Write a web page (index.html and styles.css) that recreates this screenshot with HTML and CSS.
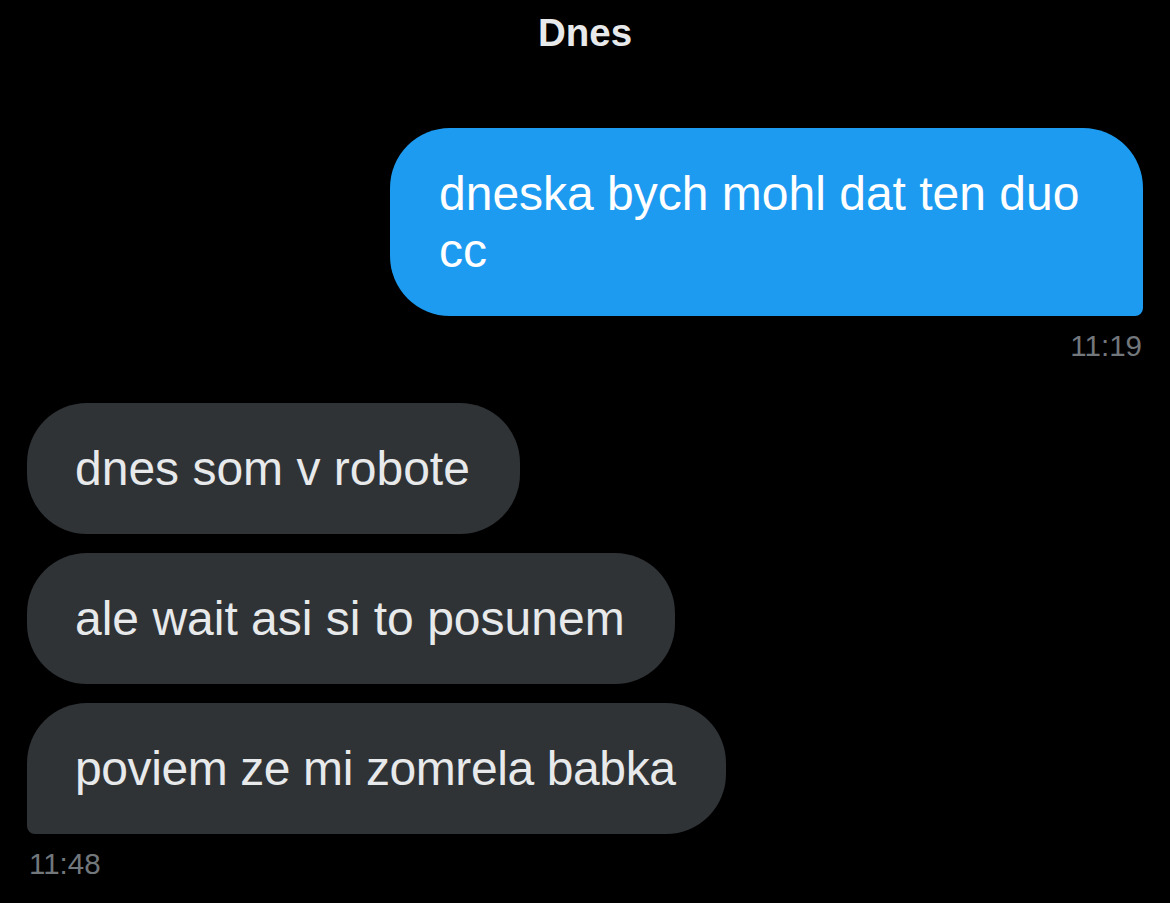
FILE: index.html
```html
<!DOCTYPE html>
<html lang="sk">
<head>
<meta charset="utf-8">
<title>Chat</title>
<link rel="stylesheet" href="styles.css">
</head>
<body>
<main class="chat">
  <div class="day">Dnes</div>
  <section class="group group-out">
    <div class="bubble bubble-out last">dneska bych mohl dat ten duo cc</div>
    <div class="time">11:19</div>
  </section>
  <section class="group group-in">
    <div class="bubble bubble-in">dnes som v robote</div>
    <div class="bubble bubble-in">ale wait asi si to posunem</div>
    <div class="bubble bubble-in last">poviem ze mi zomrela babka</div>
    <div class="time">11:48</div>
  </section>
</main>
</body>
</html>
```
FILE: styles.css
```css
html, body {
  margin: 0;
  padding: 0;
  background: #000;
}
body {
  font-family: "Liberation Sans", Arial, sans-serif;
  color: #e7e9ea;
}
.chat {
  display: flex;
  flex-direction: column;
  padding: 10px 27px 0 27px;
  height: 903px;
  box-sizing: border-box;
}
.day {
  text-align: center;
  font-weight: bold;
  font-size: 38.5px;
  line-height: 46px;
  color: #e7e9ea;
}
.group {
  display: flex;
  flex-direction: column;
  gap: 19px;
}
.group-out {
  align-items: flex-end;
  margin-top: 72px;
}
.group-in {
  align-items: flex-start;
  margin-top: 40px;
}
.bubble {
  font-size: 48px;
  line-height: 57px;
  padding: 37px 50px 37px 48px;
  border-radius: 60px;
  max-width: 753px;
  box-sizing: border-box;
}
.bubble-out {
  background: #1d9bf0;
  color: #fff;
  width: 753px;
  padding-left: 49px;
}
.bubble-out.last {
  border-bottom-right-radius: 8px;
}
.bubble-in {
  background: #2f3336;
  color: #e7e9ea;
}
.bubble-in.last {
  border-bottom-left-radius: 8px;
  letter-spacing: -0.4px;
}
.time {
  font-size: 29.5px;
  line-height: 34px;
  color: #72777c;
  margin-top: -6px;
}
.group-out .time {
  margin-right: 1px;
}
.group-in .time {
  margin-left: 2px;
}
```
